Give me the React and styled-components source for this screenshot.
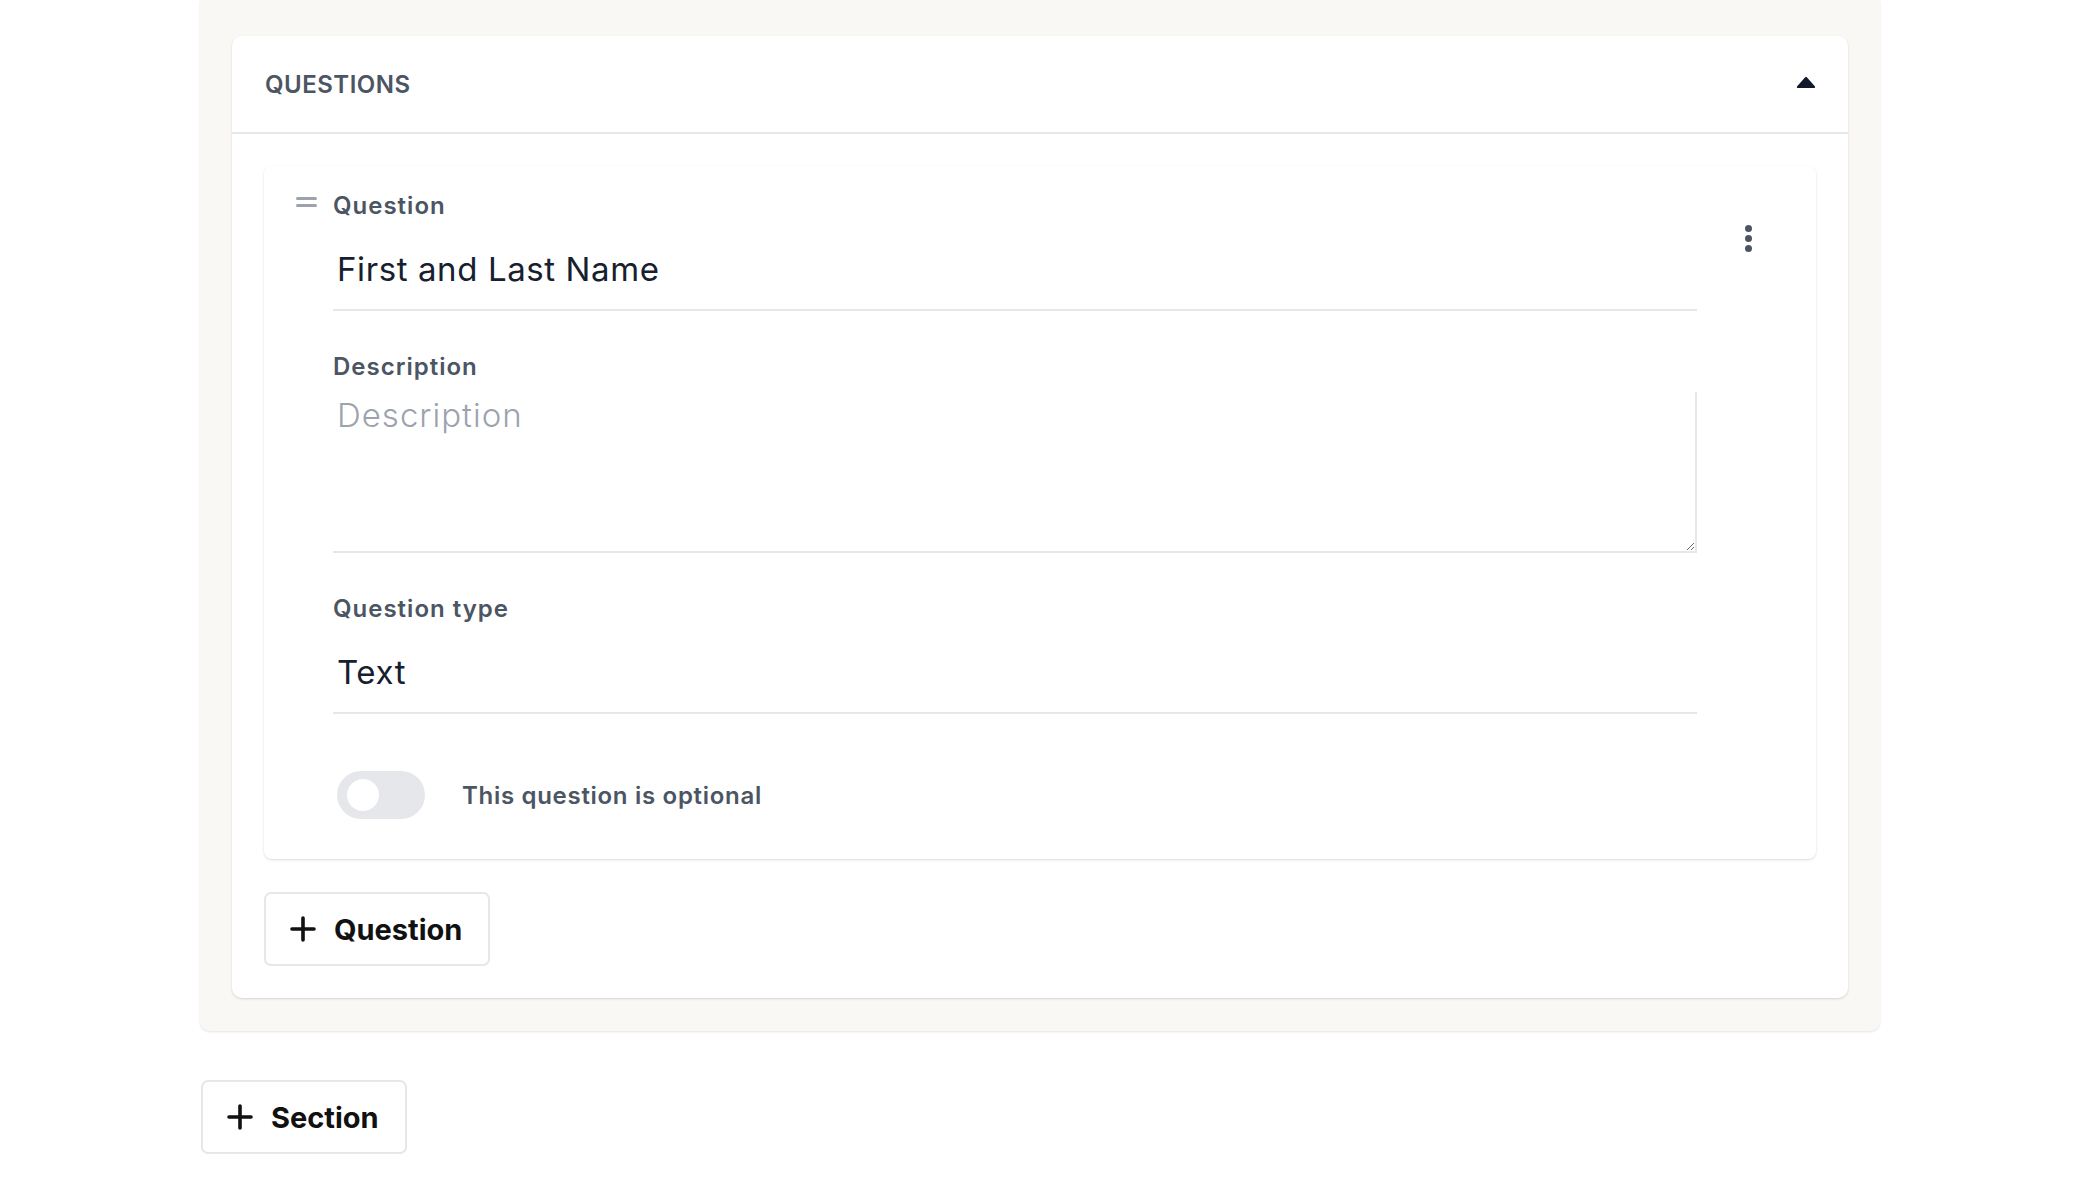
import React from "react";
import styled, { createGlobalStyle } from "styled-components";

const Global = createGlobalStyle`
  html, body { margin: 0; padding: 0; background: #ffffff; }
  body { font-family: Inter, "Open Sans", sans-serif; }
  * { box-sizing: border-box; }
`;

const Page = styled.div`
  padding: 0 200px 40px 200px;
  display: flex;
  flex-direction: column;
  align-items: flex-start;
`;

const SectionPanel = styled.section`
  width: 1680px;
  background: #f9f8f5;
  border-radius: 0 0 10px 10px;
  box-shadow: 0 1px 3px rgba(0, 0, 0, 0.08), 0 1px 2px rgba(0, 0, 0, 0.04);
  padding: 36px 32px 33px 32px;
`;

const Card = styled.div`
  background: #fff;
  border-radius: 10px;
  box-shadow: 0 1px 3px rgba(0, 0, 0, 0.1), 0 1px 2px rgba(0, 0, 0, 0.06);
`;

const CardHeader = styled.div`
  height: 98px;
  padding: 0 32px 0 33px;
  display: flex;
  align-items: center;
  justify-content: space-between;
  border-bottom: 2px solid #e5e7eb;
`;

const HeaderTitle = styled.h2`
  margin: 0;
  font-size: 24px;
  font-weight: 600;
  letter-spacing: 0.5px;
  color: #4b5563;
  text-transform: uppercase;
`;

const CaretButton = styled.button`
  border: none;
  background: none;
  padding: 0;
  width: 20px;
  height: 12px;
  display: flex;
  margin-top: -4px;
  cursor: pointer;
`;

const CardBody = styled.div`
  padding: 32px;
  display: flex;
  flex-direction: column;
  align-items: flex-start;
  gap: 33px;
`;

const QuestionCard = styled.div`
  align-self: stretch;
  background: #fff;
  border-radius: 8px;
  box-shadow: 0 1px 3px rgba(0, 0, 0, 0.1), 0 1px 2px rgba(0, 0, 0, 0.05);
  padding: 24px 48px 40px 32px;
  display: flex;
  align-items: flex-start;
`;

const Handle = styled.div`
  width: 21px;
  margin-top: 7px;
  margin-right: 16px;
  display: flex;
  cursor: grab;
`;

const Fields = styled.div`
  flex: 1;
  display: flex;
  flex-direction: column;
`;

const Field = styled.div`
  display: flex;
  flex-direction: column;
  margin-bottom: ${(p) => p.$gap || 0}px;
`;

const Label = styled.label`
  font-size: 24px;
  line-height: 32px;
  font-weight: 600;
  letter-spacing: 1px;
  color: #4b5563;
`;

const TextInput = styled.input`
  font-family: Inter, "Open Sans", sans-serif;
  font-size: 33px;
  line-height: 40px;
  height: 89px;
  font-weight: 400;
  letter-spacing: 0.6px;
  color: #17202e;
  border: none;
  border-bottom: 2px solid #e5e7eb;
  padding: 27px 4px 20px 4px;
  outline: none;
  background: transparent;
  width: 100%;
`;

const TextArea = styled.textarea`
  font-family: Inter, "Open Sans", sans-serif;
  font-size: 33px;
  line-height: 40px;
  font-weight: 400;
  letter-spacing: 1px;
  color: #17202e;
  border: none;
  border-right: 2px solid #e5e7eb;
  border-bottom: 2px solid #e5e7eb;
  border-radius: 0;
  margin-top: 9px;
  padding: 3px 4px;
  height: 161px;
  width: 100%;
  resize: vertical;
  outline: none;
  background: transparent;
  &::placeholder {
    color: #9ca3af;
    font-weight: 300;
  }
`;

const ToggleRow = styled.div`
  display: flex;
  align-items: center;
  gap: 37px;
  padding-left: 4px;
`;

const Track = styled.button`
  width: 88px;
  height: 48px;
  border-radius: 24px;
  border: none;
  background: ${(p) => (p.$on ? "#4b5563" : "#e5e7eb")};
  padding: 0 8px 0 10px;
  display: flex;
  align-items: center;
  justify-content: ${(p) => (p.$on ? "flex-end" : "flex-start")};
  cursor: pointer;
`;

const Knob = styled.span`
  width: 32px;
  height: 32px;
  border-radius: 50%;
  background: #fff;
`;

const ToggleText = styled.span`
  font-size: 24px;
  font-weight: 600;
  letter-spacing: 0.7px;
  color: #4b5563;
`;

const Kebab = styled.button`
  width: 40px;
  height: 40px;
  margin-left: 31px;
  margin-top: 28px;
  border: none;
  background: none;
  padding: 0;
  display: flex;
  flex-direction: column;
  align-items: center;
  justify-content: center;
  gap: 3px;
  cursor: pointer;
`;

const Dot = styled.span`
  width: 7px;
  height: 7px;
  border-radius: 50%;
  background: #4b5563;
`;

const AddButton = styled.button`
  height: 74px;
  display: inline-flex;
  align-items: center;
  gap: 18px;
  padding: 0 26px 0 24px;
  background: #fff;
  border: 2px solid #e5e7eb;
  border-radius: 7px;
  font-family: Inter, "Open Sans", sans-serif;
  font-size: 29px;
  font-weight: 700;
  color: #111;
  cursor: pointer;
  margin-left: ${(p) => p.$indent || 0}px;
  margin-top: ${(p) => p.$top || 0}px;
`;

const Plus = () => (
  <svg width="26" height="26" viewBox="0 0 26 26" aria-hidden="true">
    <path d="M13 2v22M2 13h22" stroke="#111" strokeWidth="3.6" strokeLinecap="round" fill="none" />
  </svg>
);

export default function App() {
  return (
    <>
      <Global />
      <Page>
        <SectionPanel>
          <Card>
            <CardHeader>
              <HeaderTitle>Questions</HeaderTitle>
              <CaretButton aria-label="Collapse">
                <svg width="20" height="12" viewBox="0 0 20 12">
                  <path
                    d="M2 11 L10 2 L18 11 Z"
                    fill="#111a2b"
                    stroke="#111a2b"
                    strokeWidth="2.2"
                    strokeLinejoin="round"
                  />
                </svg>
              </CaretButton>
            </CardHeader>
            <CardBody>
              <QuestionCard>
                <Handle>
                  <svg width="21" height="10" viewBox="0 0 21 10">
                    <path d="M1.5 1.5h18M1.5 8.5h18" stroke="#9ca3af" strokeWidth="3" strokeLinecap="round" />
                  </svg>
                </Handle>
                <Fields>
                  <Field $gap={40}>
                    <Label>Question</Label>
                    <TextInput defaultValue="First and Last Name" />
                  </Field>
                  <Field $gap={40}>
                    <Label>Description</Label>
                    <TextArea placeholder="Description" />
                  </Field>
                  <Field $gap={57}>
                    <Label>Question type</Label>
                    <TextInput defaultValue="Text" readOnly />
                  </Field>
                  <ToggleRow>
                    <Track $on={false} aria-label="Optional">
                      <Knob />
                    </Track>
                    <ToggleText>This question is optional</ToggleText>
                  </ToggleRow>
                </Fields>
                <Kebab aria-label="More">
                  <Dot />
                  <Dot />
                  <Dot />
                </Kebab>
              </QuestionCard>
              <AddButton>
                <Plus />
                Question
              </AddButton>
            </CardBody>
          </Card>
        </SectionPanel>
        <AddButton $indent={1} $top={49}>
          <Plus />
          Section
        </AddButton>
      </Page>
    </>
  );
}
